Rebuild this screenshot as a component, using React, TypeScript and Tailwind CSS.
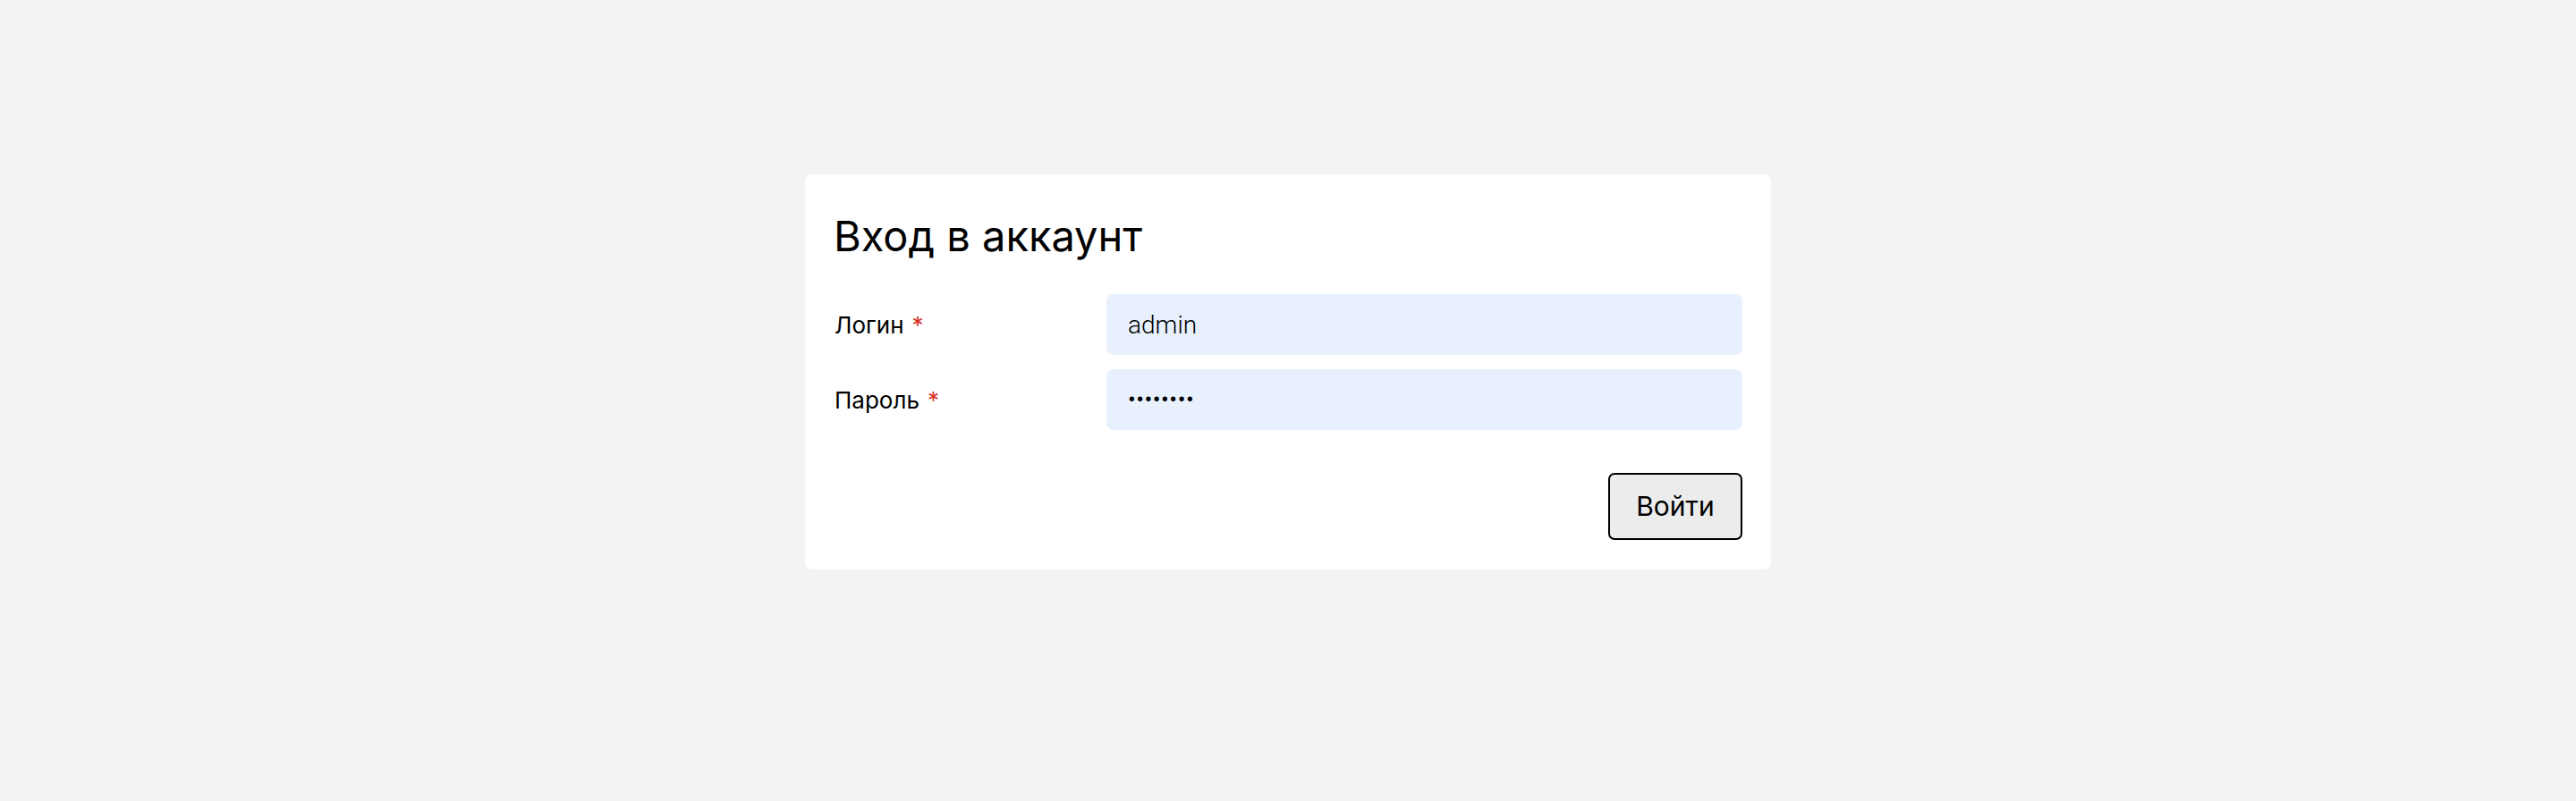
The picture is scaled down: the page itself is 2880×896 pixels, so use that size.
import React from "react";

const fields = [
  { name: "login", label: "Логин", value: "admin" },
  { name: "password", label: "Пароль", value: "••••••••" },
];

export default function App() {
  return (
    <div className="min-h-[896px] w-full bg-[#f3f3f3] pt-[195px] flex items-start justify-center font-['Inter',sans-serif] text-black">
      <div className="w-[1080px] bg-white rounded-[8px] p-[32px] pb-[33px]">
        <h1 className="mt-[8px] mb-[36px] text-[47px] leading-[58px] font-normal">Вход в аккаунт</h1>

        <div className="grid grid-cols-[305px_1fr] gap-y-[16px] items-center">
          {fields.map((field) => (
            <React.Fragment key={field.name}>
              <label className="text-[26px] pl-[1px]">
                {field.label}
                <span className="text-[#d93025] ml-[9px]">*</span>
              </label>
              <input
                readOnly
                value={field.value}
                className={
                  "h-[68px] w-full rounded-[8px] bg-[#e8f0fe] pl-[24px] outline-none text-black font-['Roboto',sans-serif] " +
                  (field.name === "password" ? "text-[26px] tracking-[0.5px]" : "text-[28px] font-light")
                }
              />
            </React.Fragment>
          ))}
        </div>

        <div className="mt-[48px] flex justify-end">
          <button className="h-[75px] w-[150px] rounded-[7px] border-2 border-black bg-[#ececec] text-[30px] font-['Inter',sans-serif]">
            Войти
          </button>
        </div>
      </div>
    </div>
  );
}
